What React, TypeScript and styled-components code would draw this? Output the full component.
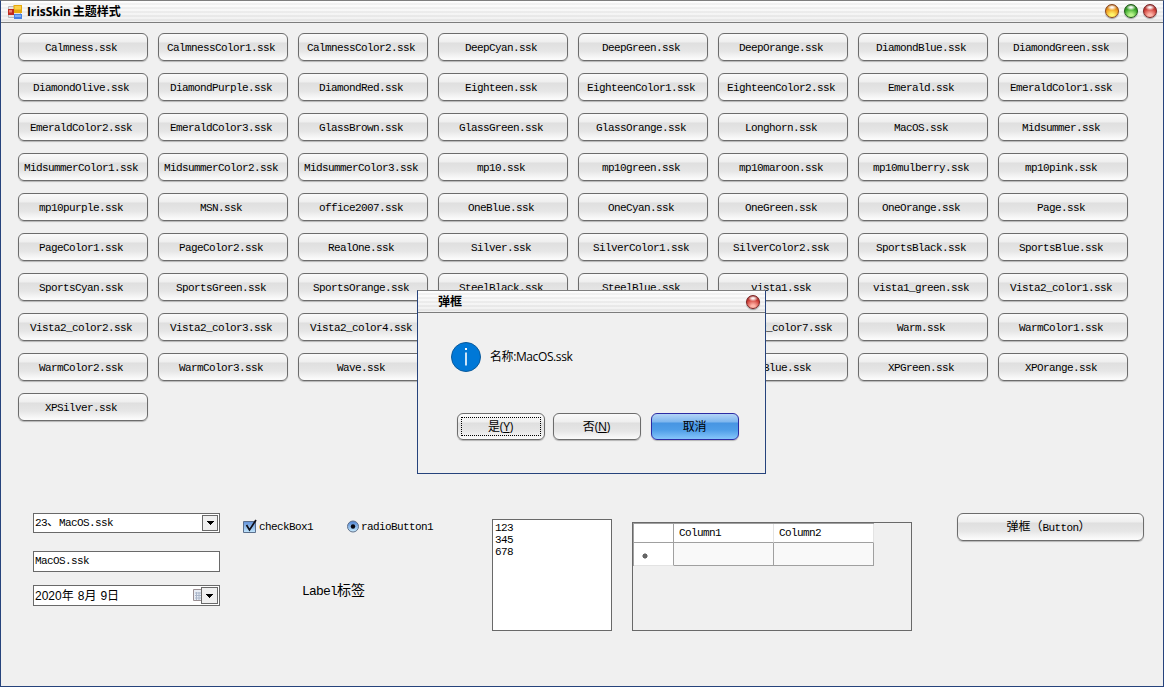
import React from "react";
import styled, { createGlobalStyle, css } from "styled-components";

const mono = `"Liberation Mono", "Noto Sans CJK SC", monospace`;
const sans = `"Open Sans", "Noto Sans CJK SC", sans-serif`;

const Global = createGlobalStyle`
  * { box-sizing: border-box; }
  body { margin: 0; background: #f0f0f0; color: #000; }
`;

/* small type on a 6px character pitch */
const controlText = css`
  font: 11px/14px ${mono};
  letter-spacing: -0.6px;
`;

const Window = styled.main`
  position: relative;
  width: 1164px;
  height: 687px;
  overflow: hidden;
  background: #f0f0f0;
  border: 1px solid #26437c;
  border-top-color: #7e7e7e;
`;

const TitleBar = styled.header<{ $dialog?: boolean }>`
  height: 22px;
  display: flex;
  align-items: center;
  border-bottom: 1px solid #7c7c7c;
  padding: ${(p) => (p.$dialog ? "0 5px 0 20px" : "0 6px 0 7px")};
  background:
    linear-gradient(rgba(255, 255, 255, 0.4), rgba(215, 215, 215, 0.35)),
    repeating-linear-gradient(#fdfdfd 0 2px, #ececec 2px 4px);
`;

const Title = styled.h1`
  margin: 0;
  flex: 1;
  font: 700 12px/20px ${sans};
  white-space: pre;
`;

const Latin = styled.span`
  letter-spacing: -0.1px;
  margin-right: 2px;
`;

const AppIcon = styled.svg`
  width: 14px;
  height: 14px;
  margin-right: 5px;
`;

const Orbs = styled.div`
  display: flex;
  gap: 5px;
  padding-bottom: 1px;
`;

const Orb = styled.i<{ $rim: string; $mid: string; $glow: string }>`
  width: 14px;
  height: 14px;
  border-radius: 50%;
  border: 1px solid ${(p) => p.$rim};
  background:
    radial-gradient(ellipse 5px 3px at 50% 20%, rgba(255, 255, 255, 0.95) 20%, rgba(255, 255, 255, 0)),
    radial-gradient(circle at 50% 90%, ${(p) => p.$glow} 15%, ${(p) => p.$mid} 60%, ${(p) => p.$rim} 100%);
  box-shadow: 0 1px 1px rgba(0, 0, 0, 0.35);
`;

const Content = styled.div`
  padding: 10px 17px 0;
`;

const SkinGrid = styled.div`
  display: grid;
  grid-template-columns: repeat(8, 130px);
  grid-auto-rows: 28px;
  gap: 12px 10px;
`;

const Button = styled.button<{ $primary?: boolean; $sans?: boolean; $wide?: boolean; $column?: number }>`
  position: relative;
  display: flex;
  align-items: center;
  justify-content: center;
  width: ${(p) => (p.$wide ? "187px" : "130px")};
  height: 28px;
  padding: 1px 4px 0 0;
  border: 1px solid #6c6c6c;
  border-radius: 6px;
  background: linear-gradient(#fafafa 0, #eeeeee 8px, #dfdfdf 9px, #e6e6e6 17px, #fbfbfb 25px);
  box-shadow: 0 1px 1px rgba(0, 0, 0, 0.25);
  color: #000;
  white-space: pre;
  ${controlText}
  ${(p) => p.$column && `grid-column: ${p.$column};`}
  ${(p) =>
    p.$sans &&
    css`
      width: 88px;
      height: 27px;
      padding: 0 1px 0 0;
      font: 12px/16px ${sans};
      letter-spacing: -0.2px;
    `}
  ${(p) =>
    p.$primary &&
    css`
      margin-left: 2px;
      border-color: #2c2ca4;
      background: linear-gradient(#b4d4f6 0, #7db6ee 8px, #4795e2 9px, #4f9ee8 16px, #86c6fb 25px);
    `}
`;

const ButtonCjk = styled.span`
  font-size: 12px;
  letter-spacing: 0;
`;

const FocusRing = styled.span`
  position: absolute;
  inset: 3px;
  border: 1px dotted #000;
`;

const Controls = styled.section`
  display: flex;
  align-items: flex-start;
  height: 120px;
  margin: 92px 0 0 15px;
`;

const FieldColumn = styled.div`
  width: 187px;
`;

const Field = styled.div<{ $top?: number; $h?: number }>`
  display: flex;
  align-items: center;
  justify-content: space-between;
  height: ${(p) => p.$h ?? 21}px;
  margin-top: ${(p) => p.$top ?? 0}px;
  padding: 0 1px 1px;
  border: 1px solid #696969;
  background: #fff;
  ${controlText}
`;

const FieldCjk = styled.span`
  font-size: 12px;
  letter-spacing: 0;
`;

const DateText = styled.span`
  flex: 1;
  padding-top: 1px;
  white-space: pre;
  font: 12px/16px "Liberation Sans", "Noto Sans CJK SC", sans-serif;
  letter-spacing: 0;
  word-spacing: 0.7px;
`;

const DropButton = styled.span<{ $w?: number }>`
  display: grid;
  place-items: center;
  width: ${(p) => p.$w ?? 17}px;
  height: ${(p) => p.$w ?? 17}px;
  margin-top: 1px;
  border: 1px solid #696969;
  background: #f0f0f0;
`;

const ChoiceColumn = styled.div`
  width: 272px;
  padding: 6px 0 0 23px;
`;

const Choices = styled.div`
  display: flex;
  gap: 34px;
`;

const Choice = styled.label`
  display: flex;
  align-items: center;
  height: 15px;
  gap: 1px;
  ${controlText}
`;

const BigLabel = styled.p`
  margin: 48px 0 0 59px;
  font: 13px/18px ${mono};
  letter-spacing: -0.8px;
`;

const LabelCjk = styled.span`
  font-size: 14px;
  letter-spacing: 0;
`;

const ListBox = styled.ul`
  width: 120px;
  height: 112px;
  margin: 6px 20px 0 0;
  padding: 2px 2px;
  list-style: none;
  border: 1px solid #696969;
  background: #fff;
  ${controlText}
  line-height: 12px;
`;

const DataPanel = styled.div`
  width: 280px;
  height: 109px;
  margin: 9px 45px 0 0;
  border: 1px solid #696969;
`;

const DataGrid = styled.div`
  display: grid;
  grid-template-columns: 40px 100px 100px;
  grid-template-rows: 19px 23px;
  width: 241px;
  border-top: 1px solid #a0a0a0;
  border-left: 1px solid #a0a0a0;
`;

const HeadCell = styled.div<{ $dark?: boolean }>`
  padding: 1px 5px;
  background: #fff;
  border-right: 1px solid ${(p) => (p.$dark ? "#a0a0a0" : "#e3e3e3")};
  border-bottom: 1px solid #a0a0a0;
  ${controlText}
  line-height: 17px;
`;

const RowHead = styled.div`
  display: flex;
  align-items: center;
  padding: 3px 0 0 8px;
  background: #fff;
  border-right: 1px solid #a0a0a0;
  border-bottom: 1px solid #e3e3e3;
`;

const Cell = styled.div`
  background: #f9f9f9;
  border-right: 1px solid #a0a0a0;
  border-bottom: 1px solid #a0a0a0;
`;

const Dialog = styled.div`
  position: absolute;
  left: 416px;
  top: 289px;
  width: 349px;
  height: 184px;
  background: #f0f0f0;
  border: 1px solid #26437c;
  border-top-color: #7e7e7e;
`;

const Message = styled.div`
  display: flex;
  align-items: center;
  gap: 8px;
  height: 32px;
  margin: 28px 0 0 32px;
  font: 12px/16px ${sans};
  letter-spacing: -0.4px;
`;

const Actions = styled.div`
  display: flex;
  gap: 8px;
  margin: 40px 0 0 39px;
`;

const skins = `Calmness CalmnessColor1 CalmnessColor2 DeepCyan DeepGreen DeepOrange DiamondBlue DiamondGreen
DiamondOlive DiamondPurple DiamondRed Eighteen EighteenColor1 EighteenColor2 Emerald EmeraldColor1
EmeraldColor2 EmeraldColor3 GlassBrown GlassGreen GlassOrange Longhorn MacOS Midsummer
MidsummerColor1 MidsummerColor2 MidsummerColor3 mp10 mp10green mp10maroon mp10mulberry mp10pink
mp10purple MSN office2007 OneBlue OneCyan OneGreen OneOrange Page
PageColor1 PageColor2 RealOne Silver SilverColor1 SilverColor2 SportsBlack SportsBlue
SportsCyan SportsGreen SportsOrange SteelBlack SteelBlue vista1 vista1_green Vista2_color1
Vista2_color2 Vista2_color3 Vista2_color4 Vista2_color7 Warm WarmColor1
WarmColor2 WarmColor3 Wave XPBlue XPGreen XPOrange
XPSilver`.split(/\s+/);

/* skins that resume their row to the right of the dialog */
const columnOf: Record<string, number> = { Vista2_color7: 6, XPBlue: 6 };

const Arrow = () => (
  <svg width="7" height="4" viewBox="0 0 7 4" shapeRendering="crispEdges">
    <path d="M0 0h7L3.5 4z" />
  </svg>
);

const RedOrb = () => <Orb $rim="#7a2020" $mid="#cf3f38" $glow="#ffb5a8" />;

const FormIcon = () => (
  <AppIcon viewBox="0 0 14 14">
    <path d="M0.5 1.5h12v11H0.5z" fill="#e4e4e6" stroke="#b8b8bc" />
    <path d="M5.5 0H14v8H5.5z" fill="#e5a80c" />
    <path d="M6.5 1H13v3.5H6.5z" fill="#fbd04a" />
    <path d="M0 4h6v6H0z" fill="#bf2a1e" />
    <path d="M1 5h3v2.5H1z" fill="#ec7c6e" />
    <path d="M6 9h8v5H6z" fill="#4580e2" />
    <path d="M7 10h6v2H7z" fill="#7dacf6" />
  </AppIcon>
);

const CheckIcon = () => (
  <svg width="15" height="15" viewBox="0 0 15 15">
    <defs>
      <linearGradient id="chk" x2="0" y2="1">
        <stop offset="0" stopColor="#5f8fd8" />
        <stop offset="1" stopColor="#c4e8fd" />
      </linearGradient>
    </defs>
    <path d="M.5 2.5h12v11H.5z" fill="url(#chk)" stroke="#5b6f8c" />
    <path d="M3.5 6l3 5L13 1" fill="none" stroke="#101018" strokeWidth="1.7" />
  </svg>
);

const RadioIcon = () => (
  <svg width="13" height="14" viewBox="0 0 13 14">
    <defs>
      <linearGradient id="rad" x2="0" y2="1">
        <stop offset="0" stopColor="#4a7fd0" />
        <stop offset="1" stopColor="#cdefff" />
      </linearGradient>
    </defs>
    <circle cx="6" cy="6.5" r="5.5" fill="url(#rad)" stroke="#60708a" />
    <circle cx="6" cy="6.5" r="2.2" fill="#080810" />
  </svg>
);

const CalendarIcon = () => (
  <svg width="8" height="13" viewBox="0 0 8 13">
    <path d="M.5.5H9v11H.5z" fill="#e9edf4" stroke="#9a8f92" />
    <path d="M2 4h7M2 6.5h7M2 9h7M3.5 3v8M6 3v8" stroke="#aab6ca" />
  </svg>
);

const InfoIcon = () => (
  <svg width="32" height="32" viewBox="0 0 32 32">
    <circle cx="16" cy="16" r="14.5" fill="#0078d7" stroke="#0a5a9c" />
    <path d="M15 7h2v2h-2zM15.2 11.5h1.6v13h-1.6z" fill="#fff" />
  </svg>
);

export default function App() {
  return (
    <Window>
      <Global />
      <TitleBar>
        <FormIcon />
        <Title>
          <Latin>IrisSkin</Latin>主题样式
        </Title>
        <Orbs>
          <Orb $rim="#8a4418" $mid="#f09a1c" $glow="#fff56a" />
          <Orb $rim="#1c5a14" $mid="#38a628" $glow="#b9f58c" />
          <RedOrb />
        </Orbs>
      </TitleBar>
      <Content>
        <SkinGrid>
          {skins.map((name) => (
            <Button key={name} $column={columnOf[name]}>
              {name}.ssk
            </Button>
          ))}
        </SkinGrid>
        <Controls>
          <FieldColumn>
            <Field $h={20}>
              <span>
                23<FieldCjk>、</FieldCjk>MacOS.ssk
              </span>
              <DropButton $w={16}>
                <Arrow />
              </DropButton>
            </Field>
            <Field $top={18}>MacOS.ssk</Field>
            <Field $top={13}>
              <DateText>2020年 8月 9日</DateText>
              <CalendarIcon />
              <DropButton>
                <Arrow />
              </DropButton>
            </Field>
          </FieldColumn>
          <ChoiceColumn>
            <Choices>
              <Choice>
                <CheckIcon />
                checkBox1
              </Choice>
              <Choice>
                <RadioIcon />
                radioButton1
              </Choice>
            </Choices>
            <BigLabel>
              Label<LabelCjk>标签</LabelCjk>
            </BigLabel>
          </ChoiceColumn>
          <ListBox>
            <li>123</li>
            <li>345</li>
            <li>678</li>
          </ListBox>
          <DataPanel>
            <DataGrid>
              <HeadCell $dark />
              <HeadCell>Column1</HeadCell>
              <HeadCell>Column2</HeadCell>
              <RowHead>
                <svg width="6" height="6" viewBox="0 0 6 6">
                  <circle cx="3" cy="3" r="2" fill="#444" />
                  <path d="M3 0v6M0 3h6M1 1l4 4M5 1L1 5" stroke="#666" />
                </svg>
              </RowHead>
              <Cell />
              <Cell />
            </DataGrid>
          </DataPanel>
          <Button $wide>
            <ButtonCjk>弹框（</ButtonCjk>Button<ButtonCjk>）</ButtonCjk>
          </Button>
        </Controls>
      </Content>
      <Dialog>
        <TitleBar $dialog>
          <Title>弹框</Title>
          <RedOrb />
        </TitleBar>
        <Message>
          <InfoIcon />
          <span>名称:MacOS.ssk</span>
        </Message>
        <Actions>
          <Button $sans>
            <FocusRing />是(<u>Y</u>)
          </Button>
          <Button $sans>
            否(<u>N</u>)
          </Button>
          <Button $sans $primary>
            取消
          </Button>
        </Actions>
      </Dialog>
    </Window>
  );
}
